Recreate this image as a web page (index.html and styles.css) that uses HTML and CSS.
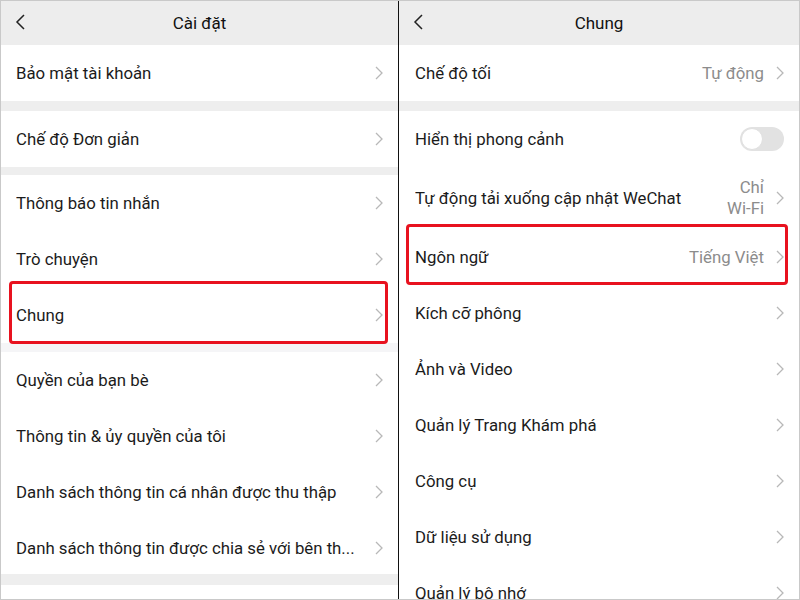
FILE: index.html
```html
<!DOCTYPE html>
<html lang="vi">
<head>
<meta charset="utf-8">
<title>Cài đặt</title>
<link rel="stylesheet" href="styles.css">
</head>
<body>
<div class="frame">
  <section class="screen left">
    <header class="bar">
      <svg class="back" width="11" height="16" viewBox="0 0 11 16"><polyline points="9,1 2,8 9,15" fill="none" stroke="#222" stroke-width="1.5"/></svg>
      <h1 class="title">Cài đặt</h1>
    </header>
    <div class="row"><span class="label">Bảo mật tài khoản</span><svg class="chev" width="8" height="14" viewBox="0 0 8 14"><polyline points="1,1 7,7 1,13" fill="none" stroke="#b8b8b8" stroke-width="1.3"/></svg></div>
    <div class="sep s10"></div>
    <div class="row"><span class="label">Chế độ Đơn giản</span><svg class="chev" width="8" height="14" viewBox="0 0 8 14"><polyline points="1,1 7,7 1,13" fill="none" stroke="#b8b8b8" stroke-width="1.3"/></svg></div>
    <div class="sep s8"></div>
    <div class="row"><span class="label">Thông báo tin nhắn</span><svg class="chev" width="8" height="14" viewBox="0 0 8 14"><polyline points="1,1 7,7 1,13" fill="none" stroke="#b8b8b8" stroke-width="1.3"/></svg></div>
    <div class="row"><span class="label">Trò chuyện</span><svg class="chev" width="8" height="14" viewBox="0 0 8 14"><polyline points="1,1 7,7 1,13" fill="none" stroke="#b8b8b8" stroke-width="1.3"/></svg></div>
    <div class="row hl hl-left"><span class="label">Chung</span><svg class="chev" width="8" height="14" viewBox="0 0 8 14"><polyline points="1,1 7,7 1,13" fill="none" stroke="#b8b8b8" stroke-width="1.3"/></svg></div>
    <div class="sep s9 faint"></div>
    <div class="row"><span class="label">Quyền của bạn bè</span><svg class="chev" width="8" height="14" viewBox="0 0 8 14"><polyline points="1,1 7,7 1,13" fill="none" stroke="#b8b8b8" stroke-width="1.3"/></svg></div>
    <div class="row"><span class="label">Thông tin &amp; ủy quyền của tôi</span><svg class="chev" width="8" height="14" viewBox="0 0 8 14"><polyline points="1,1 7,7 1,13" fill="none" stroke="#b8b8b8" stroke-width="1.3"/></svg></div>
    <div class="row"><span class="label">Danh sách thông tin cá nhân được thu thập</span><svg class="chev" width="8" height="14" viewBox="0 0 8 14"><polyline points="1,1 7,7 1,13" fill="none" stroke="#b8b8b8" stroke-width="1.3"/></svg></div>
    <div class="row"><span class="label">Danh sách thông tin được chia sẻ với bên th...</span><svg class="chev" width="8" height="14" viewBox="0 0 8 14"><polyline points="1,1 7,7 1,13" fill="none" stroke="#b8b8b8" stroke-width="1.3"/></svg></div>
    <div class="sep s11"></div>
  </section>
  <div class="divider"></div>
  <section class="screen right">
    <header class="bar">
      <svg class="back" width="11" height="16" viewBox="0 0 11 16"><polyline points="9,1 2,8 9,15" fill="none" stroke="#222" stroke-width="1.5"/></svg>
      <h1 class="title">Chung</h1>
    </header>
    <div class="row"><span class="label">Chế độ tối</span><span class="value">Tự động</span><svg class="chev" width="8" height="14" viewBox="0 0 8 14"><polyline points="1,1 7,7 1,13" fill="none" stroke="#b8b8b8" stroke-width="1.3"/></svg></div>
    <div class="sep s10"></div>
    <div class="row"><span class="label">Hiển thị phong cảnh</span><span class="toggle"><span class="knob"></span></span></div>
    <div class="row tall"><span class="label">Tự động tải xuống cập nhật WeChat</span><span class="value two">Chỉ<br>Wi-Fi</span><svg class="chev" width="8" height="14" viewBox="0 0 8 14"><polyline points="1,1 7,7 1,13" fill="none" stroke="#b8b8b8" stroke-width="1.3"/></svg></div>
    <div class="row hl hl-right"><span class="label">Ngôn ngữ</span><span class="value">Tiếng Việt</span><svg class="chev" width="8" height="14" viewBox="0 0 8 14"><polyline points="1,1 7,7 1,13" fill="none" stroke="#b8b8b8" stroke-width="1.3"/></svg></div>
    <div class="row"><span class="label">Kích cỡ phông</span><svg class="chev" width="8" height="14" viewBox="0 0 8 14"><polyline points="1,1 7,7 1,13" fill="none" stroke="#b8b8b8" stroke-width="1.3"/></svg></div>
    <div class="row"><span class="label">Ảnh và Video</span><svg class="chev" width="8" height="14" viewBox="0 0 8 14"><polyline points="1,1 7,7 1,13" fill="none" stroke="#b8b8b8" stroke-width="1.3"/></svg></div>
    <div class="row"><span class="label">Quản lý Trang Khám phá</span><svg class="chev" width="8" height="14" viewBox="0 0 8 14"><polyline points="1,1 7,7 1,13" fill="none" stroke="#b8b8b8" stroke-width="1.3"/></svg></div>
    <div class="row"><span class="label">Công cụ</span><svg class="chev" width="8" height="14" viewBox="0 0 8 14"><polyline points="1,1 7,7 1,13" fill="none" stroke="#b8b8b8" stroke-width="1.3"/></svg></div>
    <div class="row"><span class="label">Dữ liệu sử dụng</span><svg class="chev" width="8" height="14" viewBox="0 0 8 14"><polyline points="1,1 7,7 1,13" fill="none" stroke="#b8b8b8" stroke-width="1.3"/></svg></div>
    <div class="row"><span class="label">Quản lý bộ nhớ</span><svg class="chev" width="8" height="14" viewBox="0 0 8 14"><polyline points="1,1 7,7 1,13" fill="none" stroke="#b8b8b8" stroke-width="1.3"/></svg></div>
  </section>
</div>
</body>
</html>
```

FILE: styles.css
```css
* { box-sizing: border-box; }
html, body { margin: 0; padding: 0; background: #fff; }
body { font-family: Roboto, "Noto Sans", "Liberation Sans", sans-serif; color: #1b1b1b; }

.frame {
  width: 800px;
  height: 600px;
  display: flex;
  overflow: hidden;
  border: 1px solid #c9c9c9;
  background: #fff;
}

.screen {
  display: flex;
  flex-direction: column;
  overflow: hidden;
  background: #fff;
}
.screen.left { width: 397px; flex: none; }
.screen.right { flex: 1; }

.divider { width: 1px; flex: none; background: #111; }

.bar {
  height: 44px;
  flex: none;
  background: #ededed;
  display: flex;
  align-items: center;
  justify-content: center;
  position: relative;
}
.back { position: absolute; left: 14px; top: 13px; }
.title { margin: 0; font-size: 17px; font-weight: 400; color: #111; }

.row {
  height: 56px;
  flex: none;
  display: flex;
  align-items: center;
  padding: 0 15px 0 15px;
  font-size: 16.8px;
  position: relative;
}
.right .row { padding-left: 16px; }
.row.tall { height: 62px; }
.label { flex: 1; white-space: nowrap; overflow: hidden; }
.value { color: #8c8c8c; font-size: 16.8px; margin-right: 12px; text-align: right; }
.value.two { line-height: 21px; }
.chev { flex: none; }

.sep { flex: none; background: #eeeeee; }
.s10 { height: 10px; }
.s8 { height: 8px; }
.s9 { height: 9px; }
.s11 { height: 11px; margin-top: -2px; }
.faint { background: #f5f5f7; }

.toggle {
  width: 44px;
  height: 24px;
  border-radius: 12px;
  background: #e2e2e2;
  position: relative;
  flex: none;
}
.knob {
  position: absolute;
  left: 1px;
  top: 1px;
  width: 22px;
  height: 22px;
  border-radius: 50%;
  background: #fff;
  border: 1px solid #e0e0e0;
}

.hl::after {
  content: "";
  position: absolute;
  border: 3px solid #e8121f;
  border-radius: 4px;
  pointer-events: none;
}
.hl-left::after { top: -6px; bottom: -1px; left: 8px; right: 10px; }
.hl-right::after { top: -5px; bottom: 0; left: 7px; right: 11px; }
```
